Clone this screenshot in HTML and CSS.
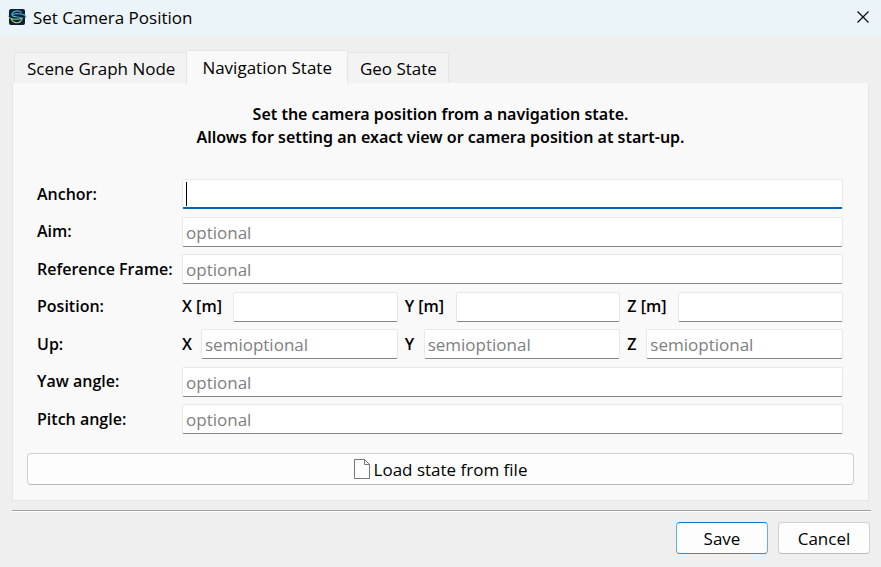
FILE: index.html
```html
<!DOCTYPE html>
<html lang="en">
<head>
<meta charset="utf-8">
<title>Set Camera Position</title>
<link rel="stylesheet" href="styles.css">
</head>
<body>
<div class="window">
  <header class="titlebar">
    <svg class="app-icon" viewBox="0 0 20 18" aria-hidden="true">
      <rect x="2" y="1" width="16" height="16" rx="2" fill="#0b2038"/>
      <path d="M14.500 4.500C12 2 7 2.500 5 5.500C4 8 7 8.800 10 9C14 9.200 16 10.500 14 13" fill="none" stroke="#4fb3cf" stroke-width="1.200"/>
      <path d="M1 7.500C2 12 11 12 16 10M4 11C6 15 11 16 14 13" fill="none" stroke="#a9cf80" stroke-width="1.100"/>
      <path d="M5 7C9 5 18 5 19 9.500" fill="none" stroke="#3e9fc0" stroke-width="1.200"/>
    </svg>
    <h1 class="title">Set Camera Position</h1>
    <button class="close" type="button" aria-label="Close">
      <svg viewBox="0 0 12 12" aria-hidden="true"><path d="M0.500 0.500L11.500 11.500M11.500 0.500L0.500 11.500" fill="none" stroke="#111" stroke-width="1.300"/></svg>
    </button>
  </header>
  <main class="content">
    <div class="tabs" role="tablist">
      <button class="tab" type="button" role="tab" aria-selected="false">Scene Graph Node</button>
      <button class="tab tab-active" type="button" role="tab" aria-selected="true">Navigation State</button>
      <button class="tab" type="button" role="tab" aria-selected="false">Geo State</button>
    </div>
    <section class="panel">
      <p class="intro">Set the camera position from a navigation state.<br>Allows for setting an exact view or camera position at start-up.</p>
      <form class="form">
        <div class="row"><label class="name" for="anchor">Anchor:</label><input class="field field-focus" id="anchor" type="text"></div>
        <div class="row"><label class="name" for="aim">Aim:</label><input class="field" id="aim" type="text" placeholder="optional"></div>
        <div class="row"><label class="name" for="frame">Reference Frame:</label><input class="field" id="frame" type="text" placeholder="optional"></div>
        <div class="row">
          <span class="name">Position:</span>
          <div class="triple">
            <div class="axis axis-unit"><label for="px">X [m]</label><input class="field" id="px" type="text"></div>
            <div class="axis axis-unit"><label for="py">Y [m]</label><input class="field" id="py" type="text"></div>
            <div class="axis axis-unit"><label for="pz">Z [m]</label><input class="field" id="pz" type="text"></div>
          </div>
        </div>
        <div class="row">
          <span class="name">Up:</span>
          <div class="triple">
            <div class="axis"><label for="ux">X</label><input class="field" id="ux" type="text" placeholder="semioptional"></div>
            <div class="axis"><label for="uy">Y</label><input class="field" id="uy" type="text" placeholder="semioptional"></div>
            <div class="axis"><label for="uz">Z</label><input class="field" id="uz" type="text" placeholder="semioptional"></div>
          </div>
        </div>
        <div class="row"><label class="name" for="yaw">Yaw angle:</label><input class="field" id="yaw" type="text" placeholder="optional"></div>
        <div class="row"><label class="name" for="pitch">Pitch angle:</label><input class="field" id="pitch" type="text" placeholder="optional"></div>
      </form>
      <button class="button load" type="button">
        <svg class="file-icon" viewBox="0 0 16 20" aria-hidden="true"><path d="M0.500 0.500H10.500L15.500 5.500V19.500H0.500ZM10.500 0.500V5.500H15.500" fill="#fff" stroke="#777"/></svg>
        Load state from file
      </button>
    </section>
    <hr class="rule">
    <footer class="actions">
      <button class="button action primary" type="button">Save</button>
      <button class="button action" type="button">Cancel</button>
    </footer>
  </main>
</div>
</body>
</html>
```
FILE: styles.css
```css
* { box-sizing: border-box; }

body {
  margin: 0;
  background: #efefef;
  color: #000;
  font-family: "Open Sans", "Noto Sans", sans-serif;
  font-size: 17px;
  line-height: 23px;
}

button, input { font: inherit; color: inherit; }

.window {
  display: flex;
  flex-direction: column;
  min-height: 100vh;
}

.titlebar {
  display: flex;
  align-items: center;
  gap: 6px;
  height: 36px;
  padding: 0 12px 2px 7px;
  background: #ebf4f8;
}

.app-icon { width: 20px; height: 18px; }

.title {
  flex: 1;
  margin: 0;
  font-size: 17px;
  font-weight: 400;
}

.close {
  display: flex;
  padding: 0;
  border: 0;
  background: none;
}

.close svg { width: 12px; height: 12px; }

.content {
  flex: 1;
  display: flex;
  flex-direction: column;
  padding: 14px 10px 13px 12px;
}

.tabs {
  display: flex;
  align-items: flex-end;
  height: 33px;
  padding-left: 2px;
}

.tab {
  height: 31px;
  padding: 0 11px 0 12px;
  border: 1px solid #e5e5e5;
  border-bottom: 0;
  border-radius: 2px 2px 0 0;
  background: #f3f3f3;
  white-space: nowrap;
}

.tab + .tab { border-left: 0; }

.tab-active,
.tab + .tab-active {
  z-index: 1;
  height: 34px;
  margin: 0 0 -1px -1px;
  padding: 0 15px;
  border-left: 1px solid #e5e5e5;
  background: #f9f9f9;
}

.panel {
  flex: 1;
  display: flex;
  flex-direction: column;
  margin-right: 2px;
  padding: 19px 14px 15px;
  border: 1px solid #e5e5e5;
  border-top-color: #f9f9f9;
  background: #f9f9f9;
}

.intro {
  margin: 0 0 30px;
  font-family: "Noto Sans", "Open Sans", sans-serif;
  font-size: 16px;
  font-weight: 600;
  text-align: center;
}

.form {
  flex: 1;
  display: flex;
  flex-direction: column;
  justify-content: space-between;
  margin-bottom: 19px;
  padding: 0 11px 0 10px;
}

.row {
  display: flex;
  align-items: center;
}

.name,
.axis label {
  font-size: 16px;
  font-weight: 600;
  white-space: nowrap;
}

.name { flex: 0 0 145px; }

.field {
  flex: 1;
  min-width: 0;
  width: 100%;
  height: 30px;
  padding: 1px 3px 0;
  border: 1px solid #e8e8e8;
  border-bottom-color: #868686;
  border-radius: 2px;
  outline: 0;
  background: #fff;
}

.field::placeholder { color: #808080; opacity: 1; }

/* Focused field with its text cursor */
.field-focus {
  border-bottom: 2px solid #0067c0;
  background: linear-gradient(#000, #000) 3px 2px / 1px 24px no-repeat #fff;
  caret-color: transparent;
}

.triple {
  flex: 1;
  display: grid;
  grid-template-columns: repeat(3, minmax(0, 1fr));
  gap: 7px;
}

.axis {
  display: flex;
  align-items: center;
}

.axis label { flex: 0 0 19px; }

.axis-unit label { flex-basis: 51px; }

.button {
  display: flex;
  align-items: center;
  justify-content: center;
  gap: 4px;
  height: 32px;
  padding: 0 12px;
  border: 1px solid #d0d0d0;
  border-bottom-color: #bababa;
  border-radius: 4px;
  background: #fdfdfd;
}

.file-icon { width: 16px; height: 20px; }

.rule {
  width: 100%;
  height: 2px;
  margin: 9px 0 10px;
  border: 0;
  border-top: 1px solid #a0a0a0;
  background: #fff;
}

.actions {
  display: flex;
  justify-content: flex-end;
  gap: 10px;
  padding-right: 1px;
}

.action { width: 92px; }

.primary {
  border-color: #62aee5;
  border-top-color: #0078d4;
  border-bottom-color: #2f8fd8;
}
```
